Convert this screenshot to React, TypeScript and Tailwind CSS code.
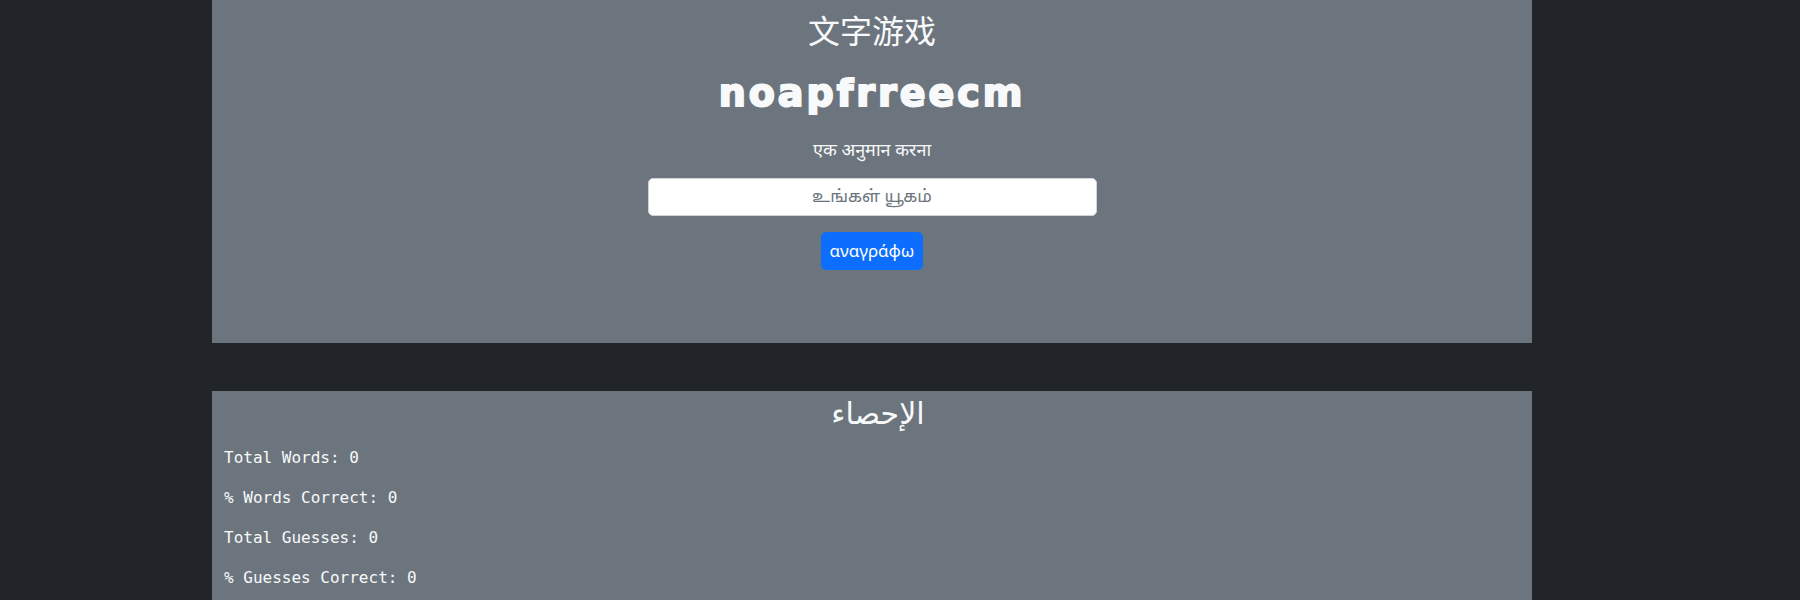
export default function App() {
    const stats = [
        "Total Words: 0",
        "% Words Correct: 0",
        "Total Guesses: 0",
        "% Guesses Correct: 0",
    ];
    return (
        <div className="min-h-screen bg-[#212529] text-[#f8f9fa]">
            {/* Game panel */}
            <section className="ml-[212px] w-[1320px] h-[343px] bg-[#6c757d] flex flex-col items-center">
                <h1 className="mt-[10px] text-[32px] leading-[38px] font-normal font-['Noto_Sans_CJK_SC',sans-serif]">
                    文字游戏
                </h1>
                <h2 className="mt-[22px] text-[38px] leading-[46px] font-bold tracking-[3px] [-webkit-text-stroke:2px_#f8f9fa] font-['DejaVu_Sans',sans-serif]">
                    noapfrreecm
                </h2>
                <p className="mt-[22px] text-[18px] leading-[27px] font-['Noto_Sans_Devanagari','Noto_Sans',sans-serif]">
                    एक अनुमान करना
                </p>
                <input
                    className="mt-[13px] w-[449px] h-[38px] rounded-[5px] border border-[#ced4da] bg-white text-center text-[17px] text-[#212529] placeholder:text-[#6c757d] outline-none font-['Noto_Sans_Tamil','Lohit_Tamil',sans-serif]"
                    placeholder="உங்கள் யூகம்"
                />
                <button className="mt-[16px] w-[102px] h-[38px] rounded-[5px] bg-[#0d6efd] text-white text-[17px] font-['Noto_Sans',sans-serif]">
                    αναγράφω
                </button>
            </section>

            {/* Stats panel */}
            <section className="mt-[48px] ml-[212px] w-[1320px] min-h-[260px] bg-[#6c757d] pl-[12px] pt-[3px]">
                <h2 className="text-center text-[30px] leading-[40px] font-['DejaVu_Sans',sans-serif]">
                    الإحصاء
                </h2>
                <div className="mt-[12px] flex flex-col gap-[16px] font-['DejaVu_Sans_Mono',monospace]">
                    {stats.map((text, index) => (
                        <p key={index} className="text-[16px] leading-[24px]">
                            {text}
                        </p>
                    ))}
                </div>
            </section>
        </div>
    )
}
